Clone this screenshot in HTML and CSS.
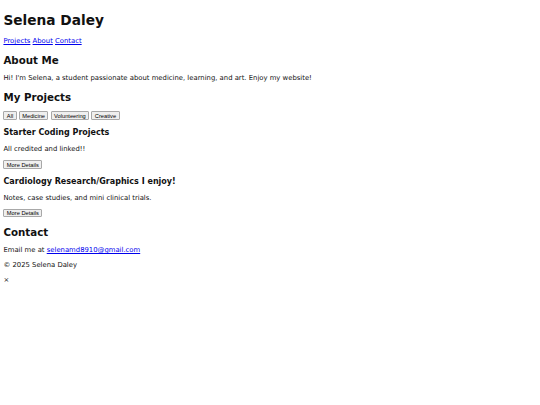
FILE: index.html
```html
<!DOCTYPE html>
<html lang="en">
<head>
<meta charset="utf-8">
<title>Selena Daley</title>
<link rel="stylesheet" href="styles.css">
</head>
<body>
<header>
<h1 class="site-title">Selena Daley</h1>
<nav class="site-nav"><a href="#projects">Projects</a> <a href="#about">About</a> <a href="#contact">Contact</a></nav>
</header>
<section id="about">
<h2 class="section-title">About Me</h2>
<p class="text">Hi! I'm Selena, a student passionate about medicine, learning, and art. Enjoy my website!</p>
</section>
<section id="projects">
<h2 class="section-title">My Projects</h2>
<div class="filters"><button class="btn">All</button> <button class="btn">Medicine</button> <button class="btn">Volunteering</button> <button class="btn">Creative</button></div>
<article class="project">
<h3 class="project-title">Starter Coding Projects</h3>
<p class="text">All credited and linked!!</p>
<button class="btn">More Details</button>
</article>
<article class="project">
<h3 class="project-title">Cardiology Research/Graphics I enjoy!</h3>
<p class="text">Notes, case studies, and mini clinical trials.</p>
<button class="btn">More Details</button>
</article>
</section>
<section id="contact">
<h2 class="section-title">Contact</h2>
<p class="text">Email me at <a href="mailto:selenamd8910@gmail.com">selenamd8910@gmail.com</a></p>
</section>
<footer>
<p class="text">© 2025 Selena Daley</p>
</footer>
<span class="close">×</span>
</body>
</html>
```

FILE: styles.css
```css
body {
  margin: 3.43px;
  font-family: "DejaVu Sans", Verdana, sans-serif;
  font-size: 6.857px;
  line-height: normal;
  color: #111;
  background: #fff;
}
a {
  color: #0000ee;
}
.site-title {
  font-size: 13.714px;
  font-weight: bold;
  margin: 8.6px 0 9.19px;
}
.section-title {
  font-size: 10.286px;
  font-weight: bold;
  margin: 8.537px 0;
}
.project-title {
  font-size: 8.023px;
  font-weight: bold;
  margin: 8.023px 0;
}
.text {
  margin: 6.857px 0;
}
.filters {
  margin: 8.537px 0;
}
.btn {
  font-family: "Liberation Sans", Arial, sans-serif;
  font-size: 5.714px;
  line-height: normal;
  color: #000;
  background: #efefef;
  border: 1px solid #a8a8a8;
  border-radius: 1px;
  padding: 0.29px 2.43px;
  margin: 0;
}
.close {
  display: block;
}
```
